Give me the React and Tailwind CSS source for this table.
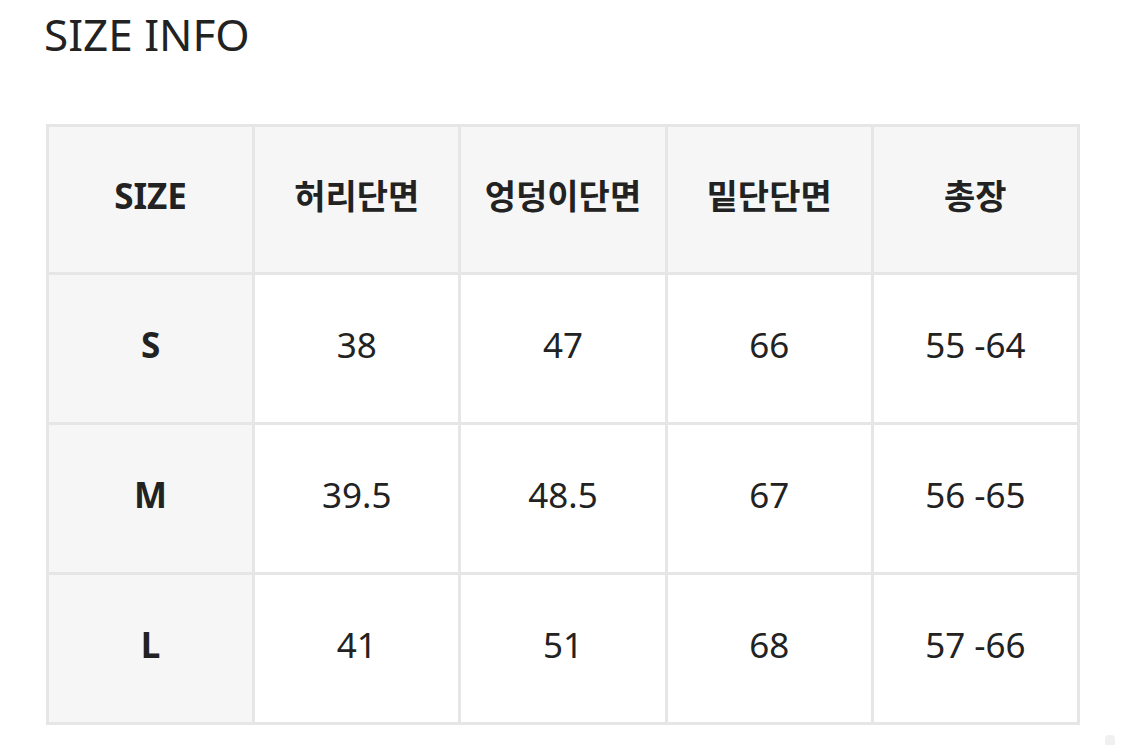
const rows = [
  { size: 'S', waist: '38', hip: '47', hem: '66', length: '55 -64' },
  { size: 'M', waist: '39.5', hip: '48.5', hem: '67', length: '56 -65' },
  { size: 'L', waist: '41', hip: '51', hem: '68', length: '57 -66' },
];

const headers = ['허리단면', '엉덩이단면', '밑단단면', '총장'];

const cell = 'border-[3px] border-[#e6e6e6] text-center align-middle pb-[6px]';

const App = () => {
  return (
    <div
      className="relative w-[1125px] h-[745px] bg-white text-[#222] overflow-hidden"
      style={{ fontFamily: '"Noto Sans", "Noto Sans CJK KR", sans-serif' }}
    >
      <h1 className="pl-[44px] pt-[12px] text-[44px] leading-none font-normal">SIZE INFO</h1>

      <table className="mt-[68px] ml-[46px] w-[1034px] table-fixed border-collapse border-[3px] border-[#e6e6e6]">
        <thead>
          <tr className="h-[148px] bg-[#f6f6f6]">
            <th className={`${cell} text-[35px] font-bold`}>SIZE</th>
            {headers.map((h) => (
              <th key={h} className={`${cell} text-[34px] font-bold`}>
                {h}
              </th>
            ))}
          </tr>
        </thead>
        <tbody>
          {rows.map((r) => (
            <tr key={r.size} className="h-[150px]">
              <td className={`${cell} bg-[#f6f6f6] text-[35px] font-bold`}>{r.size}</td>
              <td className={`${cell} text-[35px]`}>{r.waist}</td>
              <td className={`${cell} text-[35px]`}>{r.hip}</td>
              <td className={`${cell} text-[35px]`}>{r.hem}</td>
              <td className={`${cell} text-[35px]`}>{r.length}</td>
            </tr>
          ))}
        </tbody>
      </table>

      {/* scrollbar stub */}
      <div className="absolute left-[1105px] top-[735px] w-[10px] h-[14px] rounded-t-[4px] bg-[#f0f0f0]" />
    </div>
  );
};

export default App;
